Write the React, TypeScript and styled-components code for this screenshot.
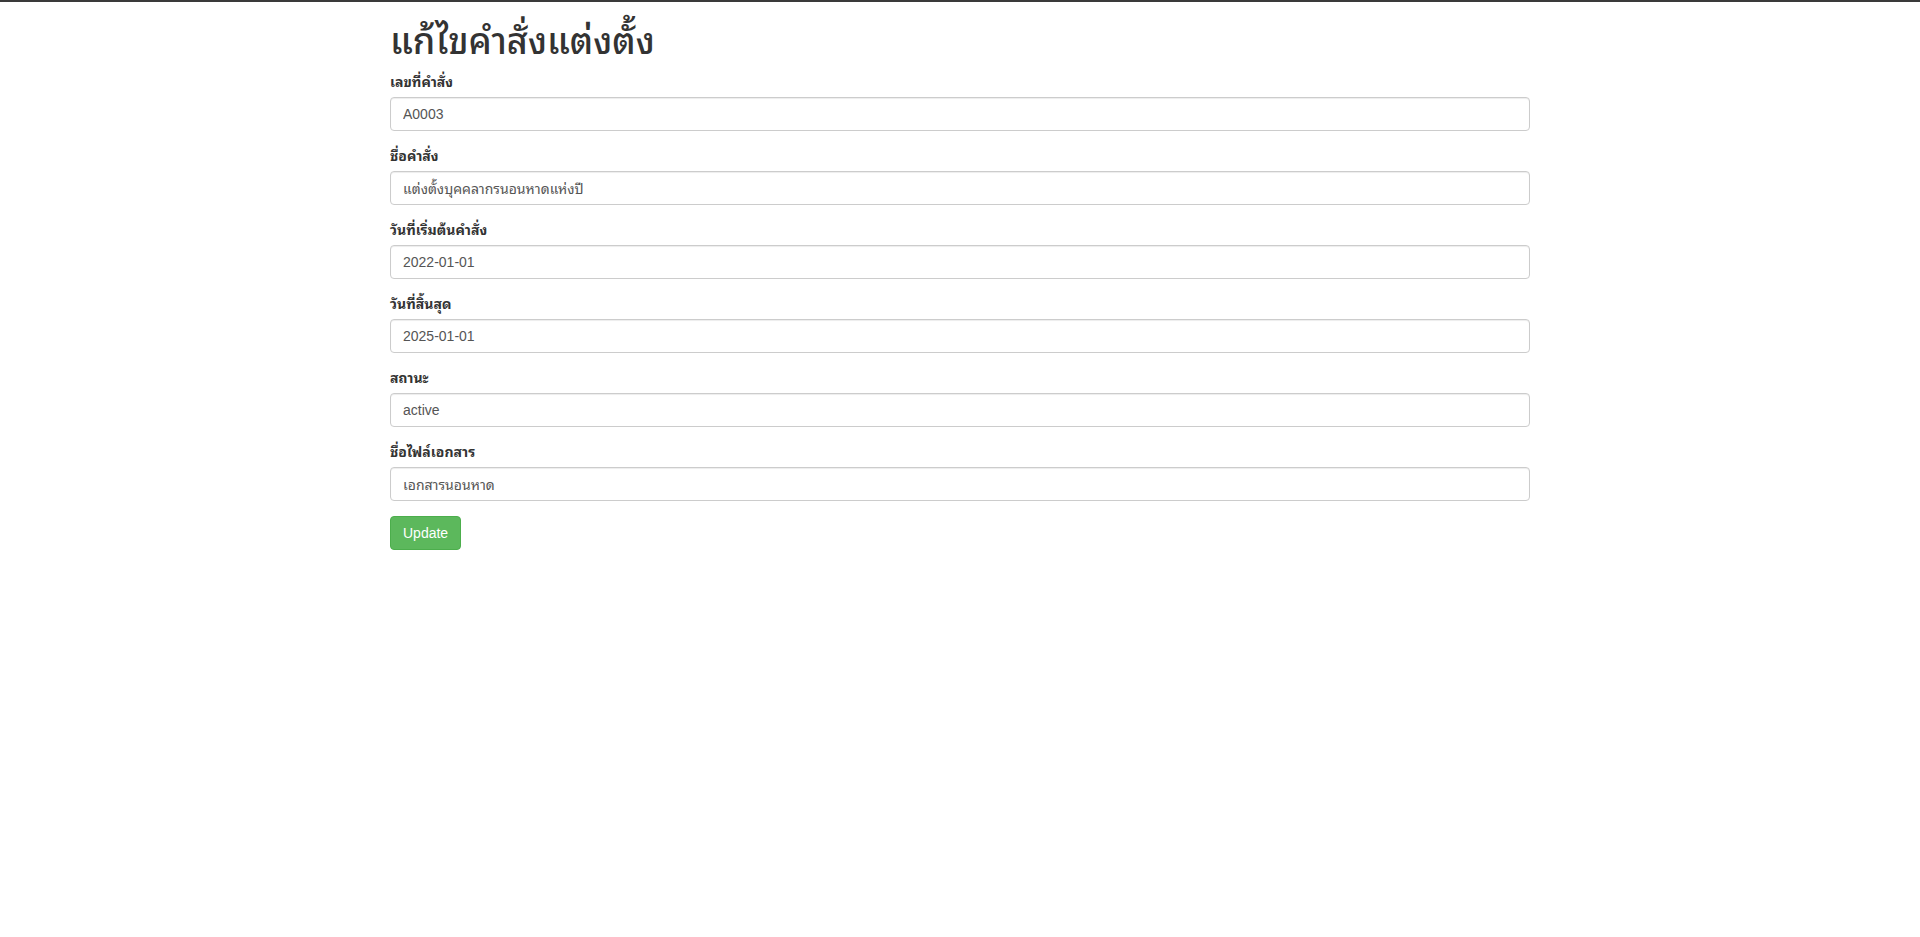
import React from "react";
import styled, { createGlobalStyle } from "styled-components";

const Global = createGlobalStyle`
  * { box-sizing: border-box; }
  html, body { margin: 0; padding: 0; background: #fff; }
  body {
    font-family: "Liberation Sans", Arial, "Noto Sans Thai Looped", "Noto Sans Thai", "Noto Sans", sans-serif;
    font-size: 14px;
    line-height: 1.42857143;
    color: #333;
  }
`;

const TopBar = styled.div`
  height: 2px;
  background: #3a3a3a;
`;

const Container = styled.div`
  width: 1170px;
  margin: 0 auto;
  padding: 0 15px;
`;

const Title = styled.h1`
  margin: 20px 0 10px;
  font-size: 36px;
  font-weight: 500;
  line-height: 1.1;
  color: #333;
`;

const Form = styled.form`
  display: flex;
  flex-direction: column;
`;

const Group = styled.div`
  margin-bottom: 15px;
`;

const Label = styled.label`
  display: block;
  margin-bottom: 5px;
  font-weight: 700;
  max-width: 100%;
`;

const Input = styled.input`
  display: block;
  width: 100%;
  height: 34px;
  padding: 6px 12px;
  font-family: inherit;
  font-size: 14px;
  line-height: 1.42857143;
  color: #555;
  background: #fff;
  border: 1px solid #ccc;
  border-radius: 4px;
  box-shadow: inset 0 1px 1px rgba(0, 0, 0, 0.075);
  outline: none;
`;

const Button = styled.button`
  align-self: flex-start;
  display: inline-block;
  padding: 6px 12px;
  font-family: inherit;
  font-size: 14px;
  line-height: 1.42857143;
  color: #fff;
  background: #5cb85c;
  border: 1px solid #4cae4c;
  border-radius: 4px;
  cursor: pointer;
`;

const fields = [
  { label: "เลขที่คำสั่ง", value: "A0003" },
  { label: "ชื่อคำสั่ง", value: "แต่งตั้งบุคคลากรนอนหาดแห่งปี" },
  { label: "วันที่เริ่มต้นคำสั่ง", value: "2022-01-01" },
  { label: "วันที่สิ้นสุด", value: "2025-01-01" },
  { label: "สถานะ", value: "active" },
  { label: "ชื่อไฟล์เอกสาร", value: "เอกสารนอนหาด" },
];

export default function App() {
  return (
    <>
      <Global />
      <TopBar />
      <Container>
        <Title>แก้ไขคำสั่งแต่งตั้ง</Title>
        <Form onSubmit={(e) => e.preventDefault()}>
          {fields.map((f, i) => (
            <Group key={i}>
              <Label htmlFor={`f${i}`}>{f.label}</Label>
              <Input id={`f${i}`} defaultValue={f.value} />
            </Group>
          ))}
          <Button type="submit">Update</Button>
        </Form>
      </Container>
    </>
  );
}
